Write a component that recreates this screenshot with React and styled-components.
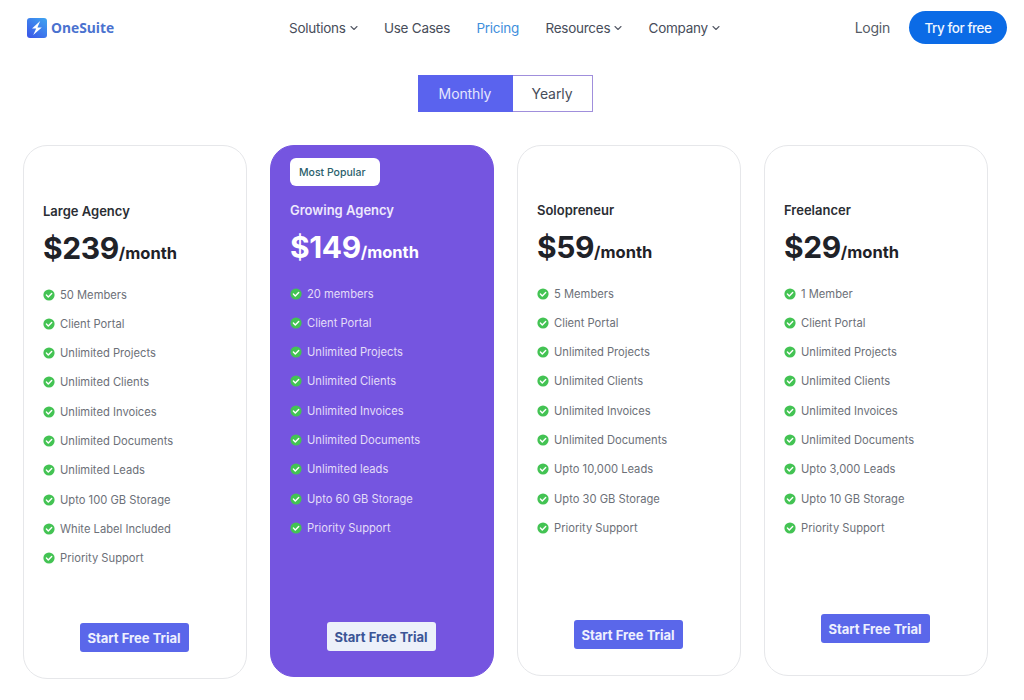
import styled, { createGlobalStyle } from 'styled-components';

const GlobalStyle = createGlobalStyle`
  html, body {
    margin: 0;
    padding: 0;
    background: #fff;
    font-family: Inter, "Liberation Sans", sans-serif;
  }
`;

const Page = styled.div`
  width: 1024px;
  height: 700px;
  overflow: hidden;
`;

const Header = styled.header`
  display: flex;
  align-items: center;
  height: 55px;
  padding: 0 17px 0 27px;
`;

const Logo = styled.div`
  display: flex;
  align-items: center;
  gap: 4px;
  width: 262px;
  font-family: "Open Sans", sans-serif;
  font-size: 13.8px;
  font-weight: 700;
  color: #4a72cf;
`;

const Nav = styled.nav`
  display: flex;
  gap: 26.3px;
  flex: 1;
`;

const NavItem = styled.a`
  display: flex;
  align-items: center;
  gap: 4px;
  font-size: 13.5px;
  letter-spacing: -0.25px;
  color: ${(p) => (p.$active ? '#3f8fdc' : '#474d5a')};
`;

const Login = styled.a`
  font-size: 14px;
  letter-spacing: -0.25px;
  color: #555b66;
  margin-right: 19px;
`;

const TryButton = styled.a`
  display: flex;
  align-items: center;
  justify-content: center;
  width: 98px;
  height: 33px;
  border-radius: 17px;
  background: #0b6be6;
  color: #f2f7ff;
  font-size: 13.5px;
  font-weight: 500;
  letter-spacing: -0.45px;
`;

const ToggleRow = styled.div`
  display: flex;
  justify-content: center;
  margin: 20px 0 33px -14px;
`;

const ToggleOption = styled.div`
  display: flex;
  align-items: center;
  justify-content: center;
  box-sizing: border-box;
  width: ${(p) => (p.$active ? '95px' : '80px')};
  height: 37px;
  font-size: 14px;
  letter-spacing: -0.1px;
  background: ${(p) => (p.$active ? '#5a63ee' : '#fff')};
  color: ${(p) => (p.$active ? '#e4e6fd' : '#474d5a')};
  border: 1px solid ${(p) => (p.$active ? '#5a63ee' : '#a08fdc')};
  border-left-width: ${(p) => (p.$active ? '1px' : '0')};
`;

const Cards = styled.div`
  display: grid;
  grid-template-columns: repeat(4, 224px);
  gap: 23px;
  align-items: start;
  padding-left: 23px;
`;

const Card = styled.section`
  position: relative;
  display: flex;
  flex-direction: column;
  box-sizing: border-box;
  height: ${(p) => p.$height}px;
  padding: ${(p) => p.$top}px 21px ${(p) => p.$bottom}px 19px;
  border-radius: 24px;
  background: ${(p) => (p.$featured ? '#7555e0' : '#fff')};
  border: 1px solid ${(p) => (p.$featured ? '#7555e0' : '#e6e7ea')};
`;

const Badge = styled.div`
  position: absolute;
  top: 12px;
  left: 19px;
  display: flex;
  align-items: center;
  box-sizing: border-box;
  width: 90px;
  height: 28px;
  padding-left: 9px;
  border-radius: 6px;
  background: #fff;
  color: #2c5f6b;
  font-size: 10.5px;
  font-weight: 500;
`;

const PlanName = styled.h3`
  margin: 0;
  font-size: 13px;
  line-height: 18px;
  font-weight: 600;
  color: ${(p) => (p.$featured ? '#eee9fc' : '#2a2d33')};
`;

const Price = styled.div`
  margin-top: 8px;
  font-size: 30px;
  line-height: 40px;
  font-weight: 700;
  letter-spacing: -0.4px;
  color: ${(p) => (p.$featured ? '#fff' : '#1f2228')};
`;

const Period = styled.span`
  font-size: 16.5px;
  letter-spacing: 0;
`;

const Features = styled.ul`
  display: flex;
  flex-direction: column;
  gap: 11.33px;
  list-style: none;
  margin: 12.5px 0 0;
  padding: 0;
`;

const Feature = styled.li`
  display: flex;
  align-items: center;
  gap: 5px;
  height: 18px;
  font-size: 11.2px;
  color: ${(p) => (p.$featured ? '#e3dcf8' : '#6c7078')};
`;

const TrialButton = styled.a`
  display: flex;
  align-items: center;
  justify-content: center;
  align-self: center;
  width: 109px;
  height: 29px;
  margin-top: auto;
  border-radius: 3px;
  font-size: 13px;
  font-weight: 700;
  background: ${(p) => (p.$featured ? '#ecf0fa' : '#5a67ea')};
  color: ${(p) => (p.$featured ? '#3b5596' : '#eef0fe')};
`;

const Chevron = () => (
  <svg width="8" height="6" viewBox="0 0 8 6" fill="none">
    <path d="M1 1.5 4 4.5 7 1.5" stroke="#565b67" strokeWidth="1.1" strokeLinecap="round" strokeLinejoin="round" />
  </svg>
);

const Check = () => (
  <svg width="12" height="12" viewBox="0 0 12 12" style={{ flexShrink: 0 }}>
    <circle cx="6" cy="6" r="5.6" fill="#43c353" />
    <path d="M3.4 6.1 5.3 8 8.7 4.4" fill="none" stroke="#fff" strokeWidth="1.4" strokeLinecap="round" strokeLinejoin="round" />
  </svg>
);

const LogoMark = () => (
  <svg width="20" height="20" viewBox="0 0 20 20">
    <defs>
      <linearGradient id="logoGrad" x1="0.9" y1="0" x2="0.1" y2="1">
        <stop offset="0" stopColor="#3fa2f0" />
        <stop offset="1" stopColor="#3a56e8" />
      </linearGradient>
    </defs>
    <rect width="20" height="20" rx="3" fill="url(#logoGrad)" />
    <path d="M13.2 3 5 10.4l4.2.2-3 6.4 8.6-7.4-4.4-.2z" fill="#fff" />
  </svg>
);

const plans = [
  {
    name: 'Large Agency',
    price: '$239',
    height: 534,
    top: 56,
    bottom: 26,
    features: ['50 Members', 'Client Portal', 'Unlimited Projects', 'Unlimited Clients', 'Unlimited Invoices', 'Unlimited Documents', 'Unlimited Leads', 'Upto 100 GB Storage', 'White Label Included', 'Priority Support'],
  },
  {
    name: 'Growing Agency',
    price: '$149',
    featured: true,
    height: 532,
    top: 55,
    bottom: 25,
    features: ['20 members', 'Client Portal', 'Unlimited Projects', 'Unlimited Clients', 'Unlimited Invoices', 'Unlimited Documents', 'Unlimited leads', 'Upto 60 GB Storage', 'Priority Support'],
  },
  {
    name: 'Solopreneur',
    price: '$59',
    height: 531,
    top: 55,
    bottom: 26,
    features: ['5 Members', 'Client Portal', 'Unlimited Projects', 'Unlimited Clients', 'Unlimited Invoices', 'Unlimited Documents', 'Upto 10,000 Leads', 'Upto 30 GB Storage', 'Priority Support'],
  },
  {
    name: 'Freelancer',
    price: '$29',
    height: 531,
    top: 55,
    bottom: 32,
    features: ['1 Member', 'Client Portal', 'Unlimited Projects', 'Unlimited Clients', 'Unlimited Invoices', 'Unlimited Documents', 'Upto 3,000 Leads', 'Upto 10 GB Storage', 'Priority Support'],
  },
];

export default function App() {
  return (
    <Page>
      <GlobalStyle />
      <Header>
        <Logo>
          <LogoMark />
          OneSuite
        </Logo>
        <Nav>
          <NavItem>Solutions <Chevron /></NavItem>
          <NavItem>Use Cases</NavItem>
          <NavItem $active>Pricing</NavItem>
          <NavItem>Resources <Chevron /></NavItem>
          <NavItem>Company <Chevron /></NavItem>
        </Nav>
        <Login>Login</Login>
        <TryButton>Try for free</TryButton>
      </Header>
      <ToggleRow>
        <ToggleOption $active>Monthly</ToggleOption>
        <ToggleOption>Yearly</ToggleOption>
      </ToggleRow>
      <Cards>
        {plans.map((plan) => (
          <Card key={plan.name} $featured={plan.featured} $height={plan.height} $top={plan.top} $bottom={plan.bottom}>
            {plan.featured && <Badge>Most Popular</Badge>}
            <PlanName $featured={plan.featured}>{plan.name}</PlanName>
            <Price $featured={plan.featured}>
              {plan.price}
              <Period>/month</Period>
            </Price>
            <Features>
              {plan.features.map((feature) => (
                <Feature key={feature} $featured={plan.featured}>
                  <Check />
                  {feature}
                </Feature>
              ))}
            </Features>
            <TrialButton $featured={plan.featured}>Start Free Trial</TrialButton>
          </Card>
        ))}
      </Cards>
    </Page>
  );
}
